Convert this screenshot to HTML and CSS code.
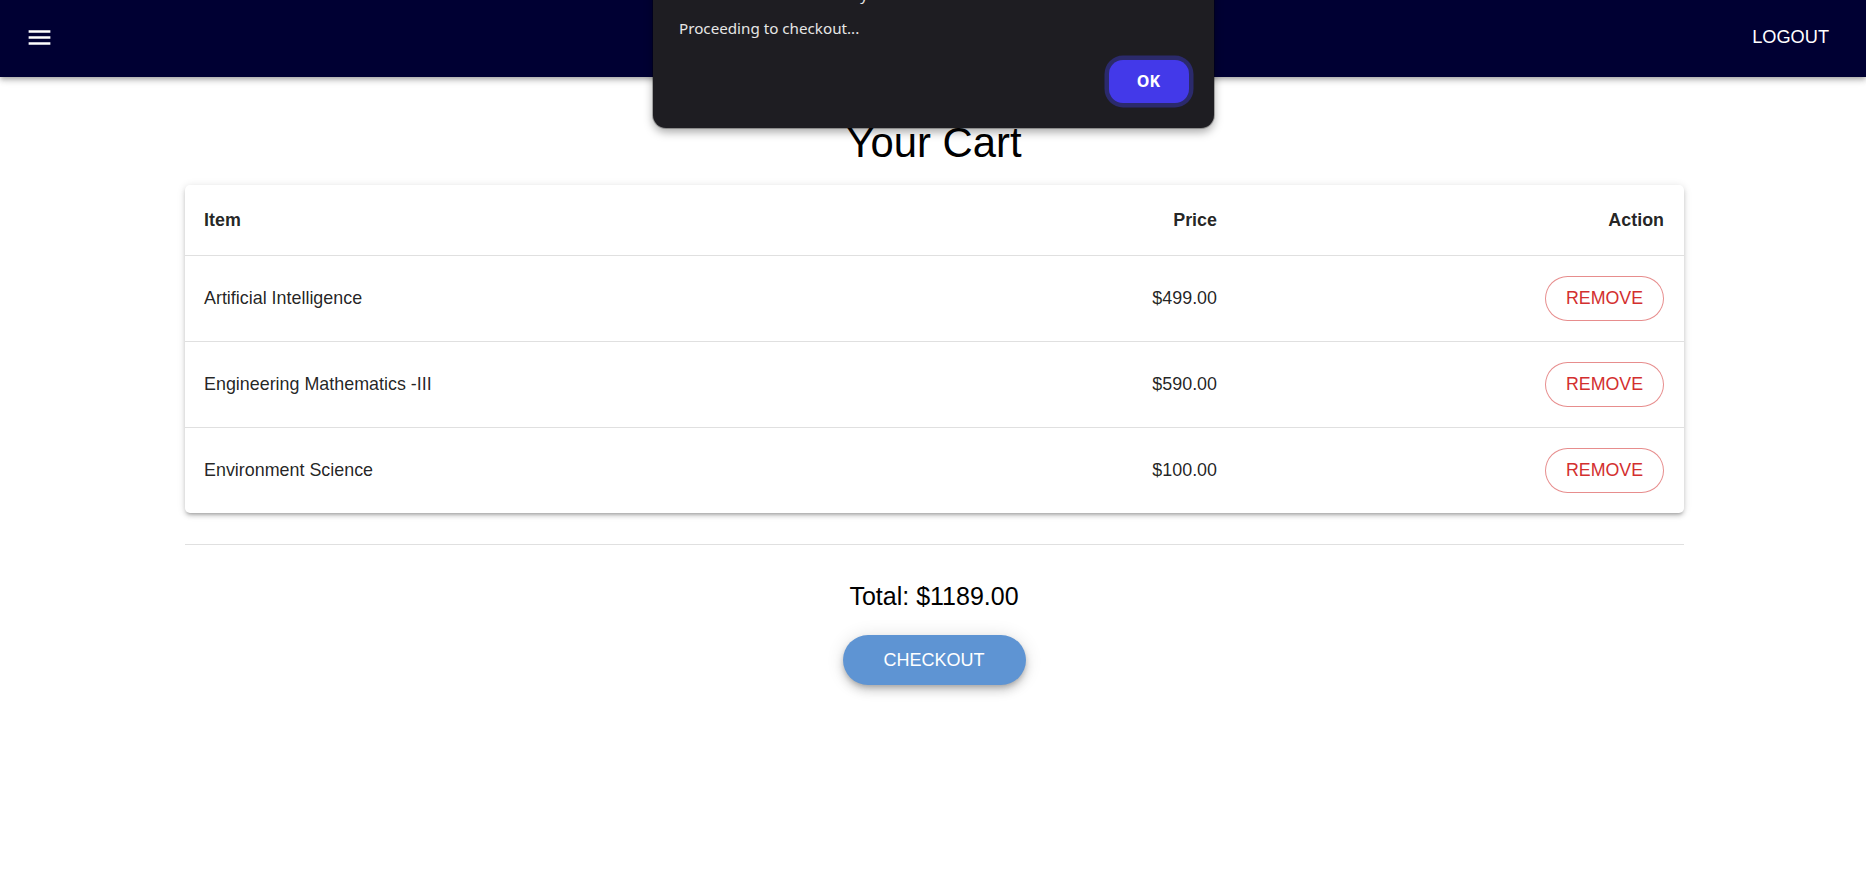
FILE: index.html
```html
<!DOCTYPE html>
<html lang="en">
<head>
<meta charset="utf-8">
<title>Your Cart</title>
<link rel="stylesheet" href="styles.css">
</head>
<body>
<header class="appbar">
  <button class="menu-btn" aria-label="menu">
    <svg class="menu-icon" viewBox="0 0 24 24" width="29" height="29"><path fill="#fff" d="M3 18h18v-2H3zm0-5h18v-2H3zm0-7v2h18V6z"/></svg>
  </button>
  <button class="logout">LOGOUT</button>
</header>

<main class="container">
  <h1 class="title">Your Cart</h1>
  <div class="card">
    <div class="row head">
      <div class="cell">Item</div>
      <div class="cell right">Price</div>
      <div class="cell right">Action</div>
    </div>
    <div class="row">
      <div class="cell">Artificial Intelligence</div>
      <div class="cell right">$499.00</div>
      <div class="cell right"><button class="remove">REMOVE</button></div>
    </div>
    <div class="row">
      <div class="cell">Engineering Mathematics -III</div>
      <div class="cell right">$590.00</div>
      <div class="cell right"><button class="remove">REMOVE</button></div>
    </div>
    <div class="row last">
      <div class="cell">Environment Science</div>
      <div class="cell right">$100.00</div>
      <div class="cell right"><button class="remove">REMOVE</button></div>
    </div>
  </div>
  <hr class="divider">
  <div class="total">Total: $1189.00</div>
  <div class="checkout-wrap"><button class="checkout">CHECKOUT</button></div>
</main>

<div class="alert" role="alertdialog">
  <div class="alert-title">localhost:3000 says</div>
  <div class="alert-msg">Proceeding to checkout...</div>
  <div class="alert-actions"><button class="ok">OK</button></div>
</div>
</body>
</html>
```
FILE: styles.css
```css
* { box-sizing: border-box; }
html, body { margin: 0; padding: 0; background: #fff; }
body {
  font-family: "Liberation Sans", Arial, sans-serif;
  color: rgba(0,0,0,0.87);
  position: relative;
  min-height: 871px;
  overflow: hidden;
}
button { font-family: inherit; cursor: pointer; }

.appbar {
  height: 77px;
  background: #000033;
  display: flex;
  align-items: center;
  justify-content: space-between;
  padding: 0 37px 0 25px;
  box-shadow: 0 2px 4px -1px rgba(0,0,0,0.2), 0 4px 5px 0 rgba(0,0,0,0.14), 0 1px 10px 0 rgba(0,0,0,0.12);
  position: relative;
  z-index: 1;
}
.menu-btn {
  background: none;
  border: 0;
  padding: 0;
  display: flex;
  margin-top: -2px;
}
.menu-icon { display: block; }
.logout {
  background: none;
  border: 0;
  padding: 0;
  color: #fff;
  font-size: 18.2px;
  font-weight: 400;
  margin-top: -3px;
}

.container {
  width: 1501px;
  margin: 0 auto;
  padding-left: 2px;
}
.title {
  margin: 42px 0 18px;
  font-size: 41.8px;
  font-weight: 400;
  line-height: normal;
  text-align: center;
  color: #000;
}
.card {
  background: #fff;
  border-radius: 5px;
  box-shadow: 0 3px 3px -2px rgba(0,0,0,0.2), 0 3px 4px 0 rgba(0,0,0,0.14), 0 1px 8px 0 rgba(0,0,0,0.12);
  overflow: hidden;
}
.row {
  display: grid;
  grid-template-columns: 752px 300px 1fr;
  height: 86px;
  align-items: center;
  border-bottom: 1px solid #e0e0e0;
  font-size: 17.9px;
  color: rgba(0,0,0,0.87);
}
.row.head {
  height: 71px;
  font-weight: 700;
}
.row.last { border-bottom: 0; height: 85px; }
.cell { padding: 0 19.5px; }
.cell.right { text-align: right; }
.remove {
  height: 45px;
  width: 119px;
  border-radius: 23px;
  border: 1px solid rgba(211,47,47,0.55);
  background: #fff;
  color: #d32f2f;
  font-size: 17.8px;
  padding: 0;
  vertical-align: middle;
}

.divider {
  margin: 31px 0 0;
  border: 0;
  border-top: 1px solid #e0e0e0;
  height: 0;
}
.total {
  margin-top: 37px;
  font-size: 25px;
  text-align: center;
  color: #000;
  line-height: normal;
}
.checkout-wrap {
  display: flex;
  justify-content: center;
  margin-top: 24px;
}
.checkout {
  width: 183px;
  height: 50px;
  border: 0;
  border-radius: 25px;
  background: #5e94d3;
  color: #fff;
  font-size: 18px;
  padding: 0;
  box-shadow: 0 3px 5px -1px rgba(0,0,0,0.2), 0 6px 10px 0 rgba(0,0,0,0.14), 0 1px 18px 0 rgba(0,0,0,0.12);
}

.alert {
  position: absolute;
  left: 653px;
  top: -40px;
  width: 561px;
  background: #1e1d22;
  border-radius: 13px;
  padding: 24px 21px 21px 26px;
  box-shadow: 0 4px 10px rgba(0,0,0,0.35), 0 0 0 1px rgba(0,0,0,0.25);
  z-index: 10;
  font-family: "Noto Sans", "Open Sans", sans-serif;
  color: #e6e6e6;
}
.alert-title {
  height: 20px;
  line-height: 20px;
  font-size: 15px;
  padding-left: 60px;
}
.alert-msg {
  margin-top: 14px;
  height: 20px;
  line-height: 20px;
  font-size: 15.2px;
}
.alert-actions {
  margin-top: 17px;
  display: flex;
  justify-content: flex-end;
}
.ok {
  margin: 4.5px;
  width: 80px;
  height: 43px;
  border: 0;
  border-radius: 14px;
  background: #4339e9;
  color: #fff;
  font-family: "Noto Sans", sans-serif;
  font-weight: 700;
  font-size: 16px;
  box-shadow: 0 0 0 4.5px #2b2a6c;
}
```
